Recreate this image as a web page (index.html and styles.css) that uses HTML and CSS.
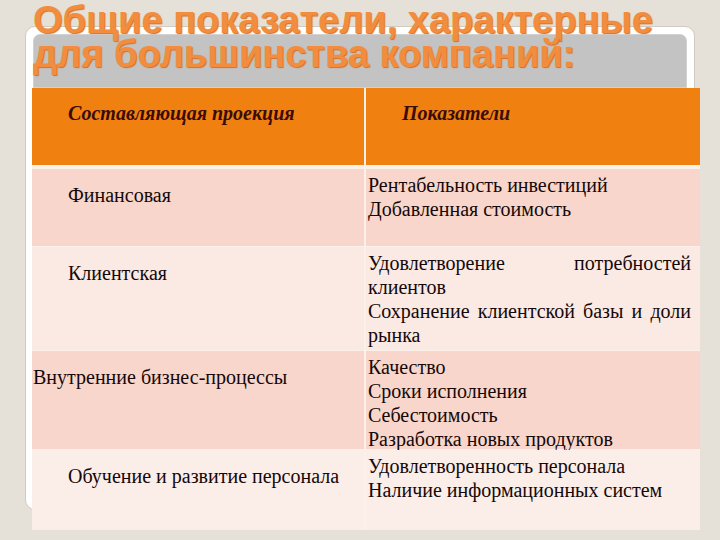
FILE: index.html
```html
<!DOCTYPE html>
<html lang="ru">
<head>
<meta charset="utf-8">
<link rel="stylesheet" href="styles.css">
</head>
<body>
<div class="slide">
  <div class="frame"><div class="band"></div></div>
  <h1 class="title">Общие показатели, характерные<br>для большинства компаний:</h1>
  <div class="table">
    <div class="cell head hl"><span class="hi">Составляющая проекция</span></div>
    <div class="cell head hr"><span class="hi">Показатели</span></div>

    <div class="cell r1 left"><p class="ind">Финансовая</p></div>
    <div class="cell r1 right"><p>Рентабельность инвестиций<br>Добавленная стоимость</p></div>

    <div class="cell r2 left"><p class="ind">Клиентская</p></div>
    <div class="cell r2 right"><p class="just">Удовлетворение потребностей клиентов</p><p class="just">Сохранение клиентской базы и доли рынка</p></div>

    <div class="cell r3 left"><p class="noind">Внутренние бизнес-процессы</p></div>
    <div class="cell r3 right"><p>Качество<br>Сроки исполнения<br>Себестоимость<br>Разработка новых продуктов</p></div>

    <div class="cell r4 left"><p class="ind">Обучение и развитие персонала</p></div>
    <div class="cell r4 right"><p>Удовлетворенность персонала<br>Наличие информационных систем</p></div>
  </div>
</div>
</body>
</html>
```
FILE: styles.css
```css
html, body {
  margin: 0;
  padding: 0;
  background: #e5e1d9;
}
.slide {
  position: relative;
  width: 720px;
  height: 540px;
  overflow: hidden;
  font-family: "Liberation Serif", "Times New Roman", serif;
}
.frame {
  position: absolute;
  left: 25px;
  top: 26px;
  width: 670px;
  height: 484px;
  background: #ffffff;
  border: 1px solid #cfcac2;
  border-radius: 10px;
  padding: 7px;
  box-sizing: border-box;
}
.band {
  height: 54px;
  background: #c3c3c3;
  border: 1px solid #d2d2d2;
  border-radius: 7px 7px 0 0;
  box-sizing: border-box;
}
.title {
  position: relative;
  margin: 0;
  padding: 3px 0 0 33px;
  height: 88px;
  box-sizing: border-box;
  font-family: "Liberation Sans", Arial, sans-serif;
  font-weight: bold;
  font-size: 38px;
  line-height: 34px;
  color: #f28d40;
  text-shadow: 1px 1px 1px #d3702a;
  white-space: nowrap;
}
.table {
  position: relative;
  margin-left: 32px;
  width: 668px;
  display: grid;
  grid-template-columns: 332px 334px;
  grid-template-rows: 80px 77px 103px 98px 80px;
  column-gap: 2px;
  row-gap: 1px;
  background: #fcf0ea;
}
.cell {
  box-sizing: border-box;
  font-size: 20px;
  line-height: 24px;
  color: #140808;
}
.cell p { margin: 0; }
.head {
  background: #f08110;
  margin-bottom: 3px;
  padding-top: 13px;
  padding-left: 36px;
}
.hi {
  font-style: italic;
  font-weight: bold;
  font-size: 20px;
  color: #3a0c08;
}
.r1, .r3 { background: #f8d6cb; }
.r2 { background: #fbe9e3; }
.r4 { background: #fbede8; }
.left { padding-top: 14px; }
.left .ind { padding-left: 36px; }
.left .noind { padding-left: 1px; }
.right { padding: 4px 9px 0 2px; }
.just { text-align: justify; text-align-last: left; }
```
